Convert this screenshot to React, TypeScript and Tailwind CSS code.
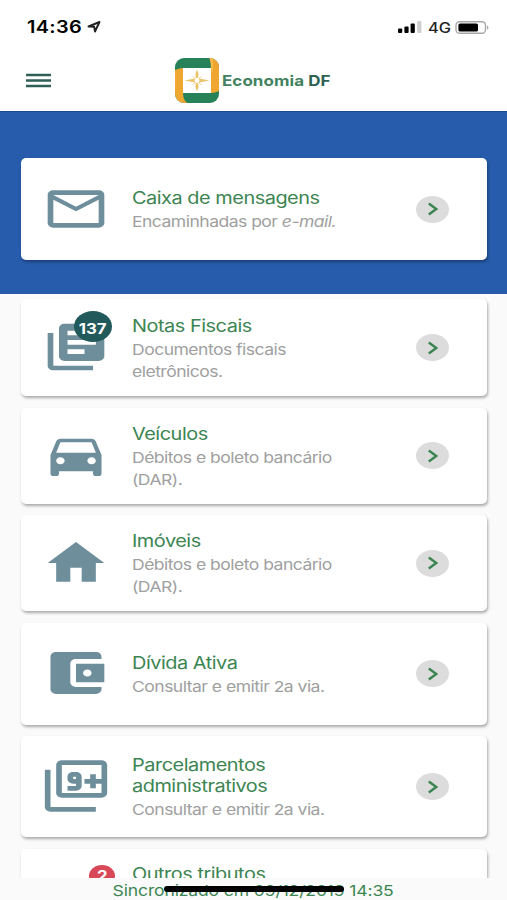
import type { ReactNode } from 'react';

interface MenuItem {
    title: string[];
    description: string[];
    icon: string;
    height: string;
    badge?: string;
}

const MAIL_ICON =
    'M20 4H4c-1.1 0-1.99.9-1.99 2L2 18c0 1.1.9 2 2 2h16c1.1 0 2-.9 2-2V6c0-1.1-.9-2-2-2zm0 14H4V8l8 5 8-5v10zm-8-7L4 6h16l-8 5z';

const items: MenuItem[] = [
    {
        title: ['Notas Fiscais'],
        description: ['Documentos fiscais', 'eletrônicos.'],
        icon: 'M4 6H2v14c0 1.1.9 2 2 2h14v-2H4V6zm16-4H8c-1.1 0-2 .9-2 2v12c0 1.1.9 2 2 2h12c1.1 0 2-.9 2-2V4c0-1.1-.9-2-2-2zm-1 9H9V9h10v2zm-4 4H9v-2h6v2zm4-8H9V5h10v2z',
        height: 'h-[97px]',
        badge: '137',
    },
    {
        title: ['Veículos'],
        description: ['Débitos e boleto bancário', '(DAR).'],
        icon: 'M18.92 6.01C18.72 5.42 18.16 5 17.5 5h-11c-.66 0-1.21.42-1.42 1.01L3 12v8c0 .55.45 1 1 1h1c.55 0 1-.45 1-1v-1h12v1c0 .55.45 1 1 1h1c.55 0 1-.45 1-1v-8l-2.08-5.99zM6.5 16c-.83 0-1.5-.67-1.5-1.5S5.67 13 6.5 13s1.5.67 1.5 1.5S7.33 16 6.5 16zm11 0c-.83 0-1.5-.67-1.5-1.5s.67-1.5 1.5-1.5 1.5.67 1.5 1.5-.67 1.5-1.5 1.5zM5 11l1.5-4.5h11L19 11H5z',
        height: 'h-[96px]',
    },
    {
        title: ['Imóveis'],
        description: ['Débitos e boleto bancário', '(DAR).'],
        icon: 'M10 20v-6h4v6h5v-8h3L12 3 2 12h3v8z',
        height: 'h-[96px]',
    },
    {
        title: ['Dívida Ativa'],
        description: ['Consultar e emitir 2a via.'],
        icon: 'M21 18v1c0 1.1-.9 2-2 2H5c-1.11 0-2-.9-2-2V5c0-1.1.89-2 2-2h14c1.1 0 2 .9 2 2v1h-9c-1.11 0-2 .9-2 2v8c0 1.1.89 2 2 2h9zm-9-2h10V8H12v8zm4-2.5c-.83 0-1.5-.67-1.5-1.5s.67-1.5 1.5-1.5 1.5.67 1.5 1.5-.67 1.5-1.5 1.5z',
        height: 'h-[102px]',
    },
    {
        title: ['Parcelamentos', 'administrativos'],
        description: ['Consultar e emitir 2a via.'],
        icon: 'M3 5H1v16c0 1.1.9 2 2 2h16v-2H3V5zm11 7V8c0-1.11-.9-2-2-2h-1c-1.1 0-2 .89-2 2v1c0 1.11.9 2 2 2h1v1H9v2h3c1.1 0 2-.89 2-2zm-3-3V8h1v1h-1zm10-8H7c-1.1 0-2 .9-2 2v12c0 1.1.9 2 2 2h14c1.1 0 2-.9 2-2V3c0-1.1-.9-2-2-2zm0 8h-2V7h-2v2h-2v2h2v2h2v-2h2v4H7V3h14v6z',
        height: 'h-[101px]',
    },
];

function Wide({ children, className = '' }: { children: ReactNode; className?: string }) {
    return (
        <span className={`block w-max origin-left scale-x-[1.17] whitespace-nowrap ${className}`}>{children}</span>
    );
}

function ItemIcon({ path }: { path: string }) {
    return (
        <svg viewBox="0 0 24 24" preserveAspectRatio="none" className="h-[56px] w-[68px] fill-[#6f8e9c]">
            <path d={path} />
        </svg>
    );
}

function Arrow() {
    return (
        <span className="flex h-[27px] w-[33px] shrink-0 items-center justify-center rounded-[50%] bg-[#dcdcdc]">
            <svg viewBox="0 0 11 14" className="h-3.5 w-[11px] fill-none stroke-[#3c8552] stroke-[2.5]">
                <path d="M1.800 1.500L9.300 7l-7.500 5.500" />
            </svg>
        </span>
    );
}

function Card({ icon, height, badge, children }: { icon: string; height: string; badge?: string; children: ReactNode }) {
    return (
        <div
            className={`flex shrink-0 items-center rounded-[5px] bg-white pr-[38px] pl-[21px] shadow-[1px_2px_3px_rgba(0,0,0,0.32)] ${height}`}
        >
            <div className="relative -mt-px shrink-0">
                <ItemIcon path={icon} />
                {badge && (
                    <span className="absolute -top-[8px] left-[32px] flex h-[31px] w-[38px] items-center justify-center rounded-[50%] bg-[#22595a] text-[14px] font-bold text-white">
                        <span className="scale-x-[1.2] pt-[3px]">{badge}</span>
                    </span>
                )}
            </div>
            <div className="flex-1 pt-[3px] pl-[22px]">{children}</div>
            <Arrow />
        </div>
    );
}

function Title({ lines }: { lines: string[] }) {
    return (
        <h2 className="text-[17px] leading-[21px] tracking-[-0.4px] text-[#3c8552]">
            {lines.map((line) => (
                <Wide key={line}>{line}</Wide>
            ))}
        </h2>
    );
}

function Description({ children }: { children: ReactNode }) {
    return <p className="mt-[2px] text-[15px] leading-[22px] tracking-[-0.45px] text-[#a0a0a0]">{children}</p>;
}

function Header() {
    return (
        <header className="h-[111px] bg-white">
            <div className="flex h-[54px] items-center pr-[17px] pl-[27px] text-black">
                <Wide className="pt-px text-[17px] font-semibold tracking-[0.3px]">14:36</Wide>
                <svg viewBox="0 0 14 12" className="ml-[13px] h-3 w-3.5 fill-none stroke-[#222] stroke-[1.9]">
                    <path d="M1.500 5.500L12.500 1 8 10.500 7.200 5.800z" strokeLinejoin="round" />
                </svg>
                <div className="ml-auto flex items-center">
                    <svg viewBox="0 0 24 12" className="h-3 w-6">
                        <rect x="0" y="7.5" width="4.2" height="4.5" rx="1" />
                        <rect x="6.4" y="5.5" width="4.2" height="6.5" rx="1" />
                        <rect x="12.6" y="2.5" width="4.2" height="9.5" rx="1" />
                        <rect x="19.2" y="0" width="4.2" height="12" rx="1" fill="#cfcfcf" />
                    </svg>
                    <Wide className="ml-[6px] text-[14px] font-medium text-[#222]">4G</Wide>
                    <svg viewBox="0 0 35 13" className="ml-[7px] h-[13px] w-[35px]">
                        <rect x="1" y=".8" width="29.5" height="11.4" rx="3.5" fill="white" stroke="#a8a8a8" strokeWidth="1.4" />
                        <rect x="3.4" y="2.4" width="19.6" height="8.2" rx="1.6" />
                        <path d="M32 4.2q3 2.3 0 4.6z" fill="#a8a8a8" />
                    </svg>
                </div>
            </div>
            <div className="flex h-[53px] items-center pl-[26px]">
                <svg viewBox="0 0 25 15" className="h-[15px] w-[25px] stroke-[#2f5f56] stroke-[2.4]">
                    <path d="M0 2h25M0 7.500h25M0 13h25" />
                </svg>
                <svg viewBox="0 0 44 45" className="ml-[123.5px] h-[45px] w-[44px]">
                    <defs>
                        <clipPath id="logo">
                            <rect width="44" height="45" rx="9" />
                        </clipPath>
                    </defs>
                    <g clipPath="url(#logo)">
                        <rect width="44" height="45" fill="#27825a" />
                        <path d="M0 12Q5 10 8 10V35Q8 42 12 45H0z" fill="#f0a732" />
                        <path d="M35 0H44V33Q40 35 36 35V10Q36 4 34.500 0z" fill="#f0a732" />
                        <path d="M34.500 0Q36 4 36 10L38 16V0z" fill="#f8ba48" />
                        <rect x="8" y="10" width="28" height="25" fill="white" />
                        <path
                            d="M22 11.500L23.600 16 23 20.500 28 21.300 34.500 22.500 28 23.700 23 24.500 23.600 29 22 33.500 20.400 29 21 24.500 16 23.700 9.500 22.500 16 21.300 21 20.500 20.400 16z"
                            fill="#ecc468"
                        />
                        <path d="M18 18.500l3 3M26 18.500l-3 3M18 26.500l3-3M26 26.500l-3-3" stroke="#ecc468" />
                        <circle cx="22" cy="22.500" r="2.400" fill="white" />
                    </g>
                </svg>
                <Wide className="ml-[3px] text-[14.5px] font-bold tracking-[0.05px] text-[#43825f]">
                    Economia <span className="text-[#2d6151]">DF</span>
                </Wide>
            </div>
        </header>
    );
}

export default function App() {
    return (
        <div className="flex h-[900px] w-[507px] flex-col overflow-hidden bg-[#fafafa] font-['Inter',sans-serif]">
            <Header />

            {/* Mailbox */}
            <section className="h-[183px] shrink-0 border-t border-[#1d4b8f] bg-[#265cab] pt-[46px] pr-[20px] pl-[21px]">
                <Card icon={MAIL_ICON} height="h-[102px]">
                    <Title lines={['Caixa de mensagens']} />
                    <Description>
                        <Wide>
                            Encaminhadas por <em>e-mail.</em>
                        </Wide>
                    </Description>
                </Card>
            </section>

            {/* Services list */}
            <main className="flex h-[584px] shrink-0 flex-col gap-[11.500px] overflow-hidden pt-[5px] pr-[20px] pl-[21px]">
                {items.map((item) => (
                    <Card key={item.title[0]} icon={item.icon} height={item.height} badge={item.badge}>
                        <Title lines={item.title} />
                        <Description>
                            {item.description.map((line) => (
                                <Wide key={line}>{line}</Wide>
                            ))}
                        </Description>
                    </Card>
                ))}
                <div className="flex h-[100px] shrink-0 rounded-[5px] bg-white pt-[15px] pl-[68px] shadow-[1px_2px_3px_rgba(0,0,0,0.32)]">
                    <span className="mt-px mr-[17px] flex h-[22px] w-[26px] items-center justify-center rounded-[50%] bg-[#d84858] text-[14px] font-bold text-white">
                        <span className="scale-x-[1.2]">2</span>
                    </span>
                    <Title lines={['Outros tributos']} />
                </div>
            </main>

            {/* Last sync */}
            <footer className="relative flex h-[22px] shrink-0 justify-center text-[15px] leading-[25px] tracking-[-0.13px] text-[#3c8552]">
                <span className="scale-x-[1.17] whitespace-nowrap">Sincronizado em 09/12/2019 14:35</span>
                <span className="absolute top-[8px] left-[164px] h-[5.500px] w-[180px] rounded-full bg-black" />
            </footer>
        </div>
    );
}
